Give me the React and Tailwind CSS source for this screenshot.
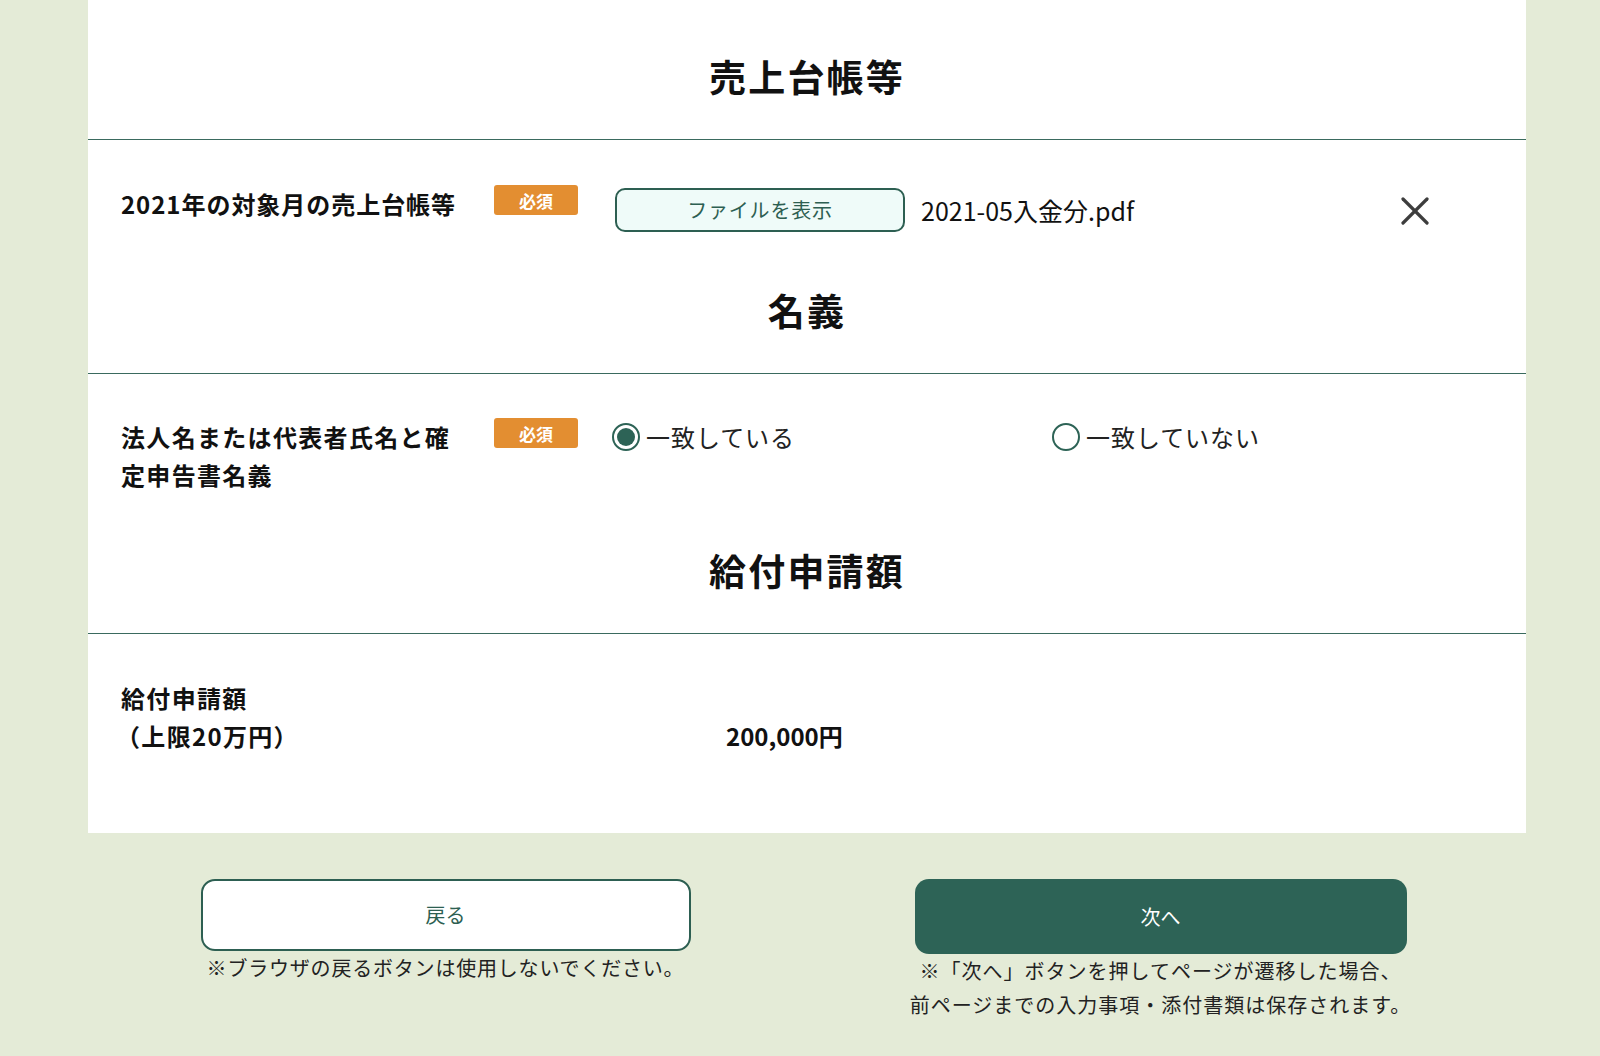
const font = { fontFamily: '"Noto Sans CJK JP", "Noto Sans", sans-serif' };

function SectionTitle({ children, top }) {
  return (
    <div className={`${top} pb-[35px] border-b-[1.5px] border-[#3a6a5e] text-center`}>
      <h2 className="text-[37px] leading-[56px] font-bold tracking-[0.06em] text-[#111]">{children}</h2>
    </div>
  );
}

function Required() {
  return (
    <span className="flex items-center justify-center w-[84px] h-[30px] rounded-[3px] bg-[#e38e31] text-white text-[17px] font-bold leading-none shrink-0">
      必須
    </span>
  );
}

function Radio({ checked, label }) {
  return (
    <label className="flex items-center gap-[6px] cursor-pointer">
      <span className="flex items-center justify-center w-[28px] h-[28px] rounded-full border-2 border-[#2d6356] bg-white shrink-0">
        {checked && <span className="w-[18px] h-[18px] rounded-full bg-[#2d6356]" />}
      </span>
      <span className="text-[24px] leading-[38px] tracking-[0.04em] text-[#222]">{label}</span>
    </label>
  );
}

export default function App() {
  return (
    <div className="min-h-screen bg-[#e4ebd7]" style={font}>
      <div className="ml-[88px] w-[1438px]">
        <div className="bg-white">
          <SectionTitle top="pt-[48px]">売上台帳等</SectionTitle>

          <div className="flex items-start pl-[33px] pt-[45px]">
            <div className="w-[373px] text-[24px] leading-[38px] font-bold tracking-[0.04em] text-[#111]">
              2021年の対象月の売上台帳等
            </div>
            <Required />
            <button className="ml-[37px] mt-[3px] w-[290px] h-[44px] rounded-[10px] border-2 border-[#2d5f52] bg-[#effbf9] text-[20px] text-[#2d5f52] tracking-[0.04em]">
              ファイルを表示
            </button>
            <span className="ml-[16px] mt-[3px] text-[25px] leading-[44px] text-[#111]">2021-05入金分.pdf</span>
            <button className="ml-auto mr-[97px] mt-[12px] w-[28px] h-[28px] flex items-center justify-center">
              <svg width="28" height="28" viewBox="0 0 28 28" fill="none" stroke="#3d3d3d" strokeWidth="3.2" strokeLinecap="round">
                <line x1="2" y1="2" x2="26" y2="26" />
                <line x1="26" y1="2" x2="2" y2="26" />
              </svg>
            </button>
          </div>

          <SectionTitle top="pt-[50px]">名義</SectionTitle>

          <div className="flex items-start pl-[33px] pt-[44px]">
            <div className="w-[373px] pr-[30px] text-[24px] leading-[38px] font-bold tracking-[0.055em] text-[#111]">
              法人名または代表者氏名と確定申告書名義
            </div>
            <Required />
            <div className="ml-[34px] grid grid-cols-2 w-[880px]">
              <Radio checked label="一致している" />
              <Radio label="一致していない" />
            </div>
          </div>

          <SectionTitle top="pt-[48px]">給付申請額</SectionTitle>

          <div className="flex items-end pl-[33px] pt-[45px] pb-[78px]">
            <div className="w-[605px] text-[24px] leading-[38px] font-bold tracking-[0.055em] text-[#111]">
              <div>給付申請額</div>
              <div className="-ml-[5px]">（上限20万円）</div>
            </div>
            <div className="text-[24px] leading-[38px] font-bold text-[#111]">200,000円</div>
          </div>
        </div>

        <div className="grid grid-cols-2 pt-[46px] pr-[8px]">
          <div className="flex flex-col items-center">
            <button className="w-[490px] h-[72px] rounded-[14px] border-2 border-[#2d5f52] bg-white text-[20px] text-[#2d5f52]">
              戻る
            </button>
            <p className="text-[20px] leading-[34px] text-[#222] tracking-[0.04em]">
              ※ブラウザの戻るボタンは使用しないでください。
            </p>
          </div>
          <div className="flex flex-col items-center">
            <button className="w-[492px] h-[75px] rounded-[14px] bg-[#2d6356] text-[20px] text-white">
              次へ
            </button>
            <p className="text-[20px] leading-[34px] text-[#222] text-center tracking-[0.05em]">
              ※「次へ」ボタンを押してページが遷移した場合、
              <br />
              前ページまでの入力事項・添付書類は保存されます。
            </p>
          </div>
        </div>
      </div>
    </div>
  );
}
